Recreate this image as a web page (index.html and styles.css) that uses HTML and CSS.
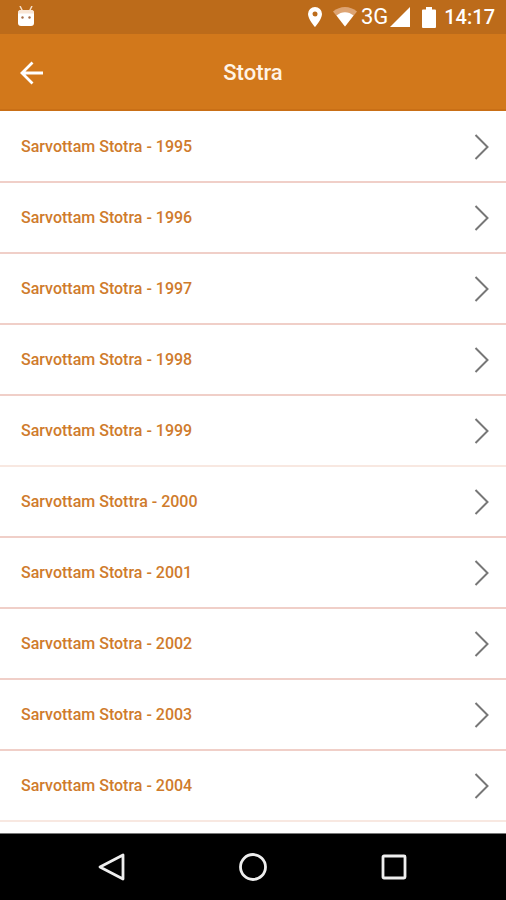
FILE: index.html
```html
<!DOCTYPE html>
<html lang="en">
<head>
<meta charset="utf-8">
<meta name="viewport" content="width=device-width, initial-scale=1">
<title>Stotra</title>
<link rel="stylesheet" href="styles.css">
</head>
<body>
<svg class="sprite" aria-hidden="true">
  <symbol id="chevron" viewBox="0 0 16 28"><path d="M1.500 2L13.500 14L1.500 26" fill="none" stroke="currentColor" stroke-width="2"/></symbol>
</svg>
<div class="status">
  <svg class="bot" width="18" height="22" viewBox="0 0 18 22" aria-label="Notification">
    <path d="M3 0L5.500 5M15 0L12.500 5" stroke="#f6dfc9" stroke-width="1.500"/>
    <rect x="1" y="4" width="16" height="16" rx="3" fill="#fff"/>
    <path d="M1 7.500V7a3 3 0 0 1 3-3h10a3 3 0 0 1 3 3v.5z" fill="#f9e6d5"/>
    <circle cx="5.500" cy="11.500" r="1.200" fill="#a9704b"/><circle cx="12.500" cy="11.500" r="1.200" fill="#a9704b"/>
  </svg>
  <div class="indicators">
    <svg class="pin" width="16" height="20" viewBox="0 0 16 20" aria-label="Location"><path fill="#fff" fill-rule="evenodd" d="M8 0a7 7 0 0 0-7 7c0 5.200 7 13 7 13s7-7.800 7-13a7 7 0 0 0-7-7zm0 4.500a2.500 2.500 0 1 1 0 5 2.500 2.500 0 0 1 0-5z"/></svg>
    <svg class="wifi" width="24" height="20" viewBox="0 0 24 20" aria-label="Wi-Fi"><path fill="#dda473" d="M0 4.500C7-1.500 17-1.500 24 4.500L12 19.500z"/><path fill="#fff" d="M3.500 8.500C8.500 4 15.500 4 20.500 8.500L12 19.500z"/></svg>
    <span class="network">3G</span>
    <svg class="signal" width="20" height="20" viewBox="0 0 20 20" aria-label="Signal"><path fill="#fff" d="M20 0V20H0z"/></svg>
    <svg class="battery" width="14" height="21" viewBox="0 0 14 21" aria-label="Battery"><path fill="#fff" d="M4 0h6v2.500h3a1 1 0 0 1 1 1V20a1 1 0 0 1-1 1H1a1 1 0 0 1-1-1V3.500a1 1 0 0 1 1-1h3z"/></svg>
    <time class="clock">14:17</time>
  </div>
</div>
<header class="appbar">
  <button class="back" type="button" aria-label="Back">
    <svg width="24" height="24" viewBox="0 0 24 24"><path d="M23 12H2M12.500 1.500L2 12l10.500 10.500" fill="none" stroke="#fff" stroke-width="2.800"/></svg>
  </button>
  <h1 class="title">Stotra</h1>
</header>
<main class="content">
  <ul class="list">
    <li><a class="row" href="#1995">Sarvottam Stotra - 1995<svg class="chevron"><use href="#chevron"/></svg></a></li>
    <li><a class="row" href="#1996">Sarvottam Stotra - 1996<svg class="chevron"><use href="#chevron"/></svg></a></li>
    <li><a class="row" href="#1997">Sarvottam Stotra - 1997<svg class="chevron"><use href="#chevron"/></svg></a></li>
    <li><a class="row" href="#1998">Sarvottam Stotra - 1998<svg class="chevron"><use href="#chevron"/></svg></a></li>
    <li><a class="row soft" href="#1999">Sarvottam Stotra - 1999<svg class="chevron"><use href="#chevron"/></svg></a></li>
    <li><a class="row" href="#2000">Sarvottam Stottra - 2000<svg class="chevron"><use href="#chevron"/></svg></a></li>
    <li><a class="row" href="#2001">Sarvottam Stotra - 2001<svg class="chevron"><use href="#chevron"/></svg></a></li>
    <li><a class="row" href="#2002">Sarvottam Stotra - 2002<svg class="chevron"><use href="#chevron"/></svg></a></li>
    <li><a class="row" href="#2003">Sarvottam Stotra - 2003<svg class="chevron"><use href="#chevron"/></svg></a></li>
    <li><a class="row soft" href="#2004">Sarvottam Stotra - 2004<svg class="chevron"><use href="#chevron"/></svg></a></li>
  </ul>
</main>
<nav class="navbar" aria-label="System">
  <button type="button" aria-label="Back"><svg width="28" height="28" viewBox="0 0 28 28"><path d="M25 2v24L2 14z"/></svg></button>
  <button type="button" aria-label="Home"><svg width="28" height="28" viewBox="0 0 28 28"><circle cx="14" cy="14" r="12.500"/></svg></button>
  <button type="button" aria-label="Recents"><svg width="28" height="28" viewBox="0 0 28 28"><rect x="3" y="3" width="22" height="22" rx="1"/></svg></button>
</nav>
</body>
</html>
```
FILE: styles.css
```css
* { box-sizing: border-box; }

body {
  margin: 0;
  min-height: 100vh;
  display: flex;
  flex-direction: column;
  background: #fff;
  font-family: Roboto, "Liberation Sans", sans-serif;
}

svg { display: block; flex: none; }
.sprite { position: absolute; width: 0; height: 0; }

button {
  display: flex;
  align-items: center;
  justify-content: center;
  padding: 0;
  border: 0;
  background: none;
}

.status {
  display: flex;
  align-items: center;
  justify-content: space-between;
  height: 34px;
  padding: 0 11px 0 17px;
  background: #bc6b1a;
  color: #fff;
}

.indicators { display: flex; align-items: center; }
.wifi { margin-left: 10px; }
.network {
  margin-left: 4px;
  font-size: 22px;
  line-height: 34px;
}
.signal { margin-left: 2px; }
.battery { margin-left: 12px; }
.clock {
  margin-left: 8px;
  font-size: 20px;
  font-weight: 500;
  line-height: 34px;
}

.appbar {
  display: grid;
  grid-template-columns: 64px 1fr 64px;
  align-items: center;
  height: 77px;
  padding-top: 2px;
  background: #d2781b;
  border-bottom: 2px solid #c96f16;
}
.back { height: 48px; }
.title {
  margin: 0;
  color: #fff3e6;
  font-size: 22px;
  font-weight: 500;
  line-height: 28px;
  text-align: center;
}

.content { flex: 1; padding-top: 1px; }
.list { margin: 0; padding: 0; list-style: none; }
.row {
  display: flex;
  align-items: center;
  justify-content: space-between;
  height: 71px;
  padding: 1px 16px 0 21px;
  border-bottom: 2px solid #f0cfc8;
  color: #cf7b2c;
  font-size: 16px;
  font-weight: 500;
  line-height: 20px;
  text-decoration: none;
}
.row.soft { border-color: #f8e8e1; }
.chevron { width: 16px; height: 28px; color: #777; }

.navbar {
  display: flex;
  justify-content: center;
  gap: 93px;
  height: 67px;
  border-top: 1px solid #777;
  background: #000;
}
.navbar button { width: 48px; }
.navbar svg { fill: none; stroke: #eee; stroke-width: 2.800; stroke-linejoin: round; }
```
